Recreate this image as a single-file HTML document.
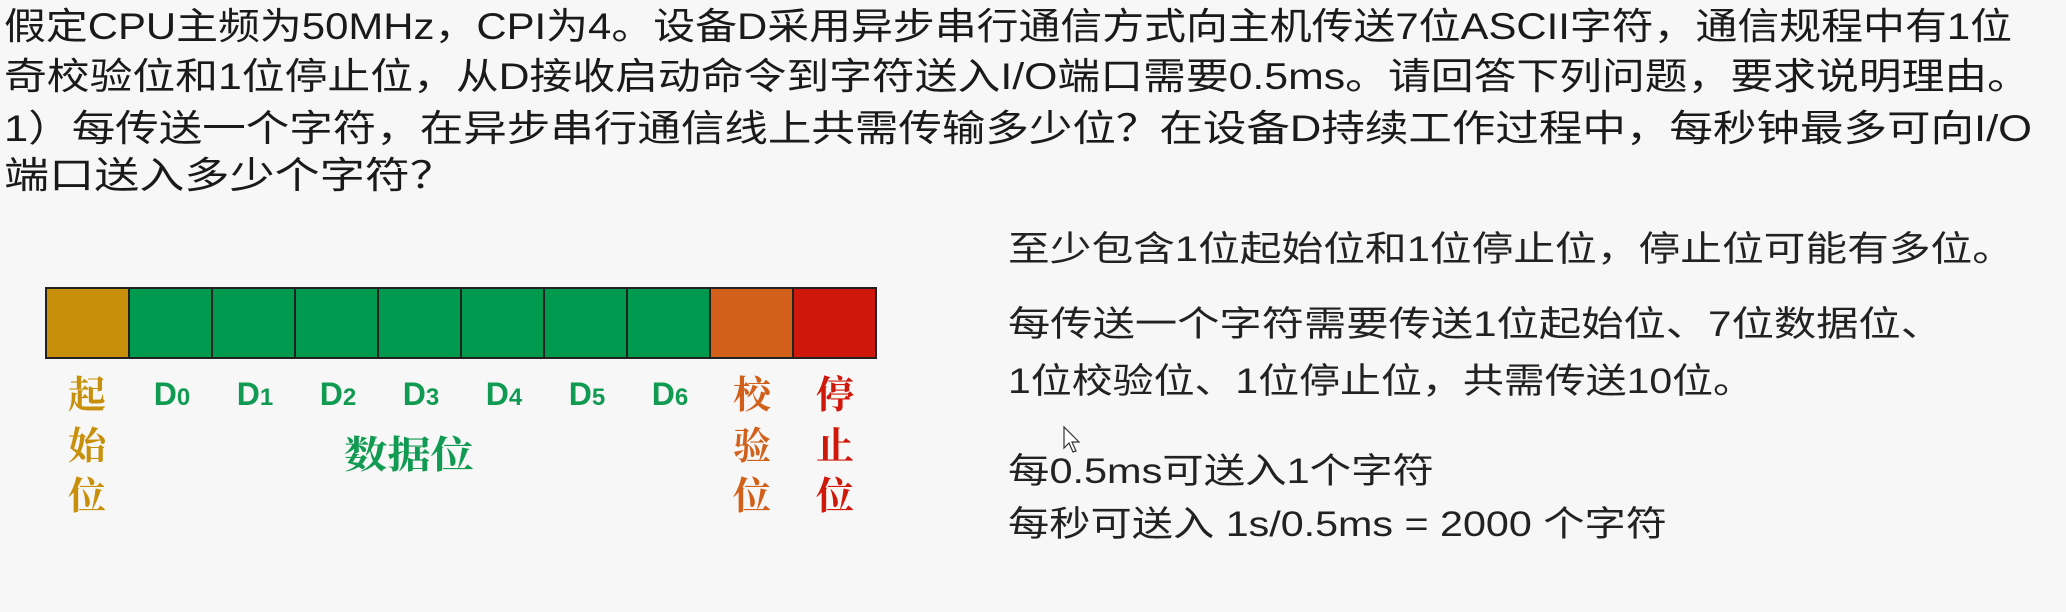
<!DOCTYPE html>
<html><head><meta charset="utf-8">
<style>
html,body{margin:0;padding:0;background:#f7f7f7;}
svg{display:block}
.q{font-family:"Liberation Sans","Noto Sans CJK SC",sans-serif;font-size:37px;fill:#1a1a1a}
.r{font-family:"Liberation Sans","Noto Sans CJK SC",sans-serif;font-size:35px;fill:#222}
.d{font-family:"Liberation Sans",sans-serif;font-weight:bold;font-size:32px;fill:#119a52}
.v{font-family:"Noto Serif CJK SC","Noto Sans CJK SC",serif;font-size:38px;font-weight:bold}
</style></head>
<body>
<svg width="2066" height="612" viewBox="0 0 2066 612" xmlns="http://www.w3.org/2000/svg">
<rect width="2066" height="612" fill="#f7f7f7"/>
<text class="q" x="4" y="39" textLength="2008" lengthAdjust="spacingAndGlyphs">假定CPU主频为50MHz，CPI为4。设备D采用异步串行通信方式向主机传送7位ASCII字符，通信规程中有1位</text>
<text class="q" x="4" y="89" textLength="2026" lengthAdjust="spacingAndGlyphs">奇校验位和1位停止位，从D接收启动命令到字符送入I/O端口需要0.5ms。请回答下列问题，要求说明理由。</text>
<text class="q" x="4" y="141" textLength="2028" lengthAdjust="spacingAndGlyphs">1）每传送一个字符，在异步串行通信线上共需传输多少位？在设备D持续工作过程中，每秒钟最多可向I/O</text>
<text class="q" x="4" y="188" textLength="451" lengthAdjust="spacingAndGlyphs">端口送入多少个字符？</text>

<g stroke="#222" stroke-width="2">
<rect x="46" y="288" width="83" height="70" fill="#c8900a"/>
<rect x="129" y="288" width="83" height="70" fill="#009a4e"/>
<rect x="212" y="288" width="83" height="70" fill="#009a4e"/>
<rect x="295" y="288" width="83" height="70" fill="#009a4e"/>
<rect x="378" y="288" width="83" height="70" fill="#009a4e"/>
<rect x="461" y="288" width="83" height="70" fill="#009a4e"/>
<rect x="544" y="288" width="83" height="70" fill="#009a4e"/>
<rect x="627" y="288" width="83" height="70" fill="#009a4e"/>
<rect x="710" y="288" width="83" height="70" fill="#d2601a"/>
<rect x="793" y="288" width="83" height="70" fill="#d0180a"/>
</g>
<g text-anchor="middle">
<text class="d" x="172" y="405">D<tspan font-size="24">0</tspan></text>
<text class="d" x="255" y="405">D<tspan font-size="24">1</tspan></text>
<text class="d" x="338" y="405">D<tspan font-size="24">2</tspan></text>
<text class="d" x="421" y="405">D<tspan font-size="24">3</tspan></text>
<text class="d" x="504" y="405">D<tspan font-size="24">4</tspan></text>
<text class="d" x="587" y="405">D<tspan font-size="24">5</tspan></text>
<text class="d" x="670" y="405">D<tspan font-size="24">6</tspan></text>
<g class="v" fill="#c8900a"><text x="87" y="408">起</text><text x="87" y="459">始</text><text x="87" y="509">位</text></g>
<g class="v" fill="#d2601a"><text x="752" y="408">校</text><text x="752" y="459">验</text><text x="752" y="509">位</text></g>
<g class="v" fill="#d0180a"><text x="835" y="408">停</text><text x="835" y="459">止</text><text x="835" y="509">位</text></g>
<text class="v" x="409" y="468" fill="#119a52" font-size="40" textLength="130" lengthAdjust="spacingAndGlyphs">数据位</text>
</g>

<text class="r" x="1008" y="261" textLength="1006" lengthAdjust="spacingAndGlyphs">至少包含1位起始位和1位停止位，停止位可能有多位。</text>
<text class="r" x="1008" y="336" textLength="935" lengthAdjust="spacingAndGlyphs">每传送一个字符需要传送1位起始位、7位数据位、</text>
<text class="r" x="1008" y="393" textLength="746" lengthAdjust="spacingAndGlyphs">1位校验位、1位停止位，共需传送10位。</text>
<text class="r" x="1008" y="483" textLength="426" lengthAdjust="spacingAndGlyphs">每0.5ms可送入1个字符</text>
<text class="r" x="1008" y="536" textLength="659" lengthAdjust="spacingAndGlyphs">每秒可送入 1s/0.5ms = 2000 个字符</text>

<path d="M1064 427 L1064 448 L1069 443 L1073 452 L1076 451 L1072 442 L1079 442 Z" fill="#fff" stroke="#333" stroke-width="1.2"/>
</svg>
</body></html>
